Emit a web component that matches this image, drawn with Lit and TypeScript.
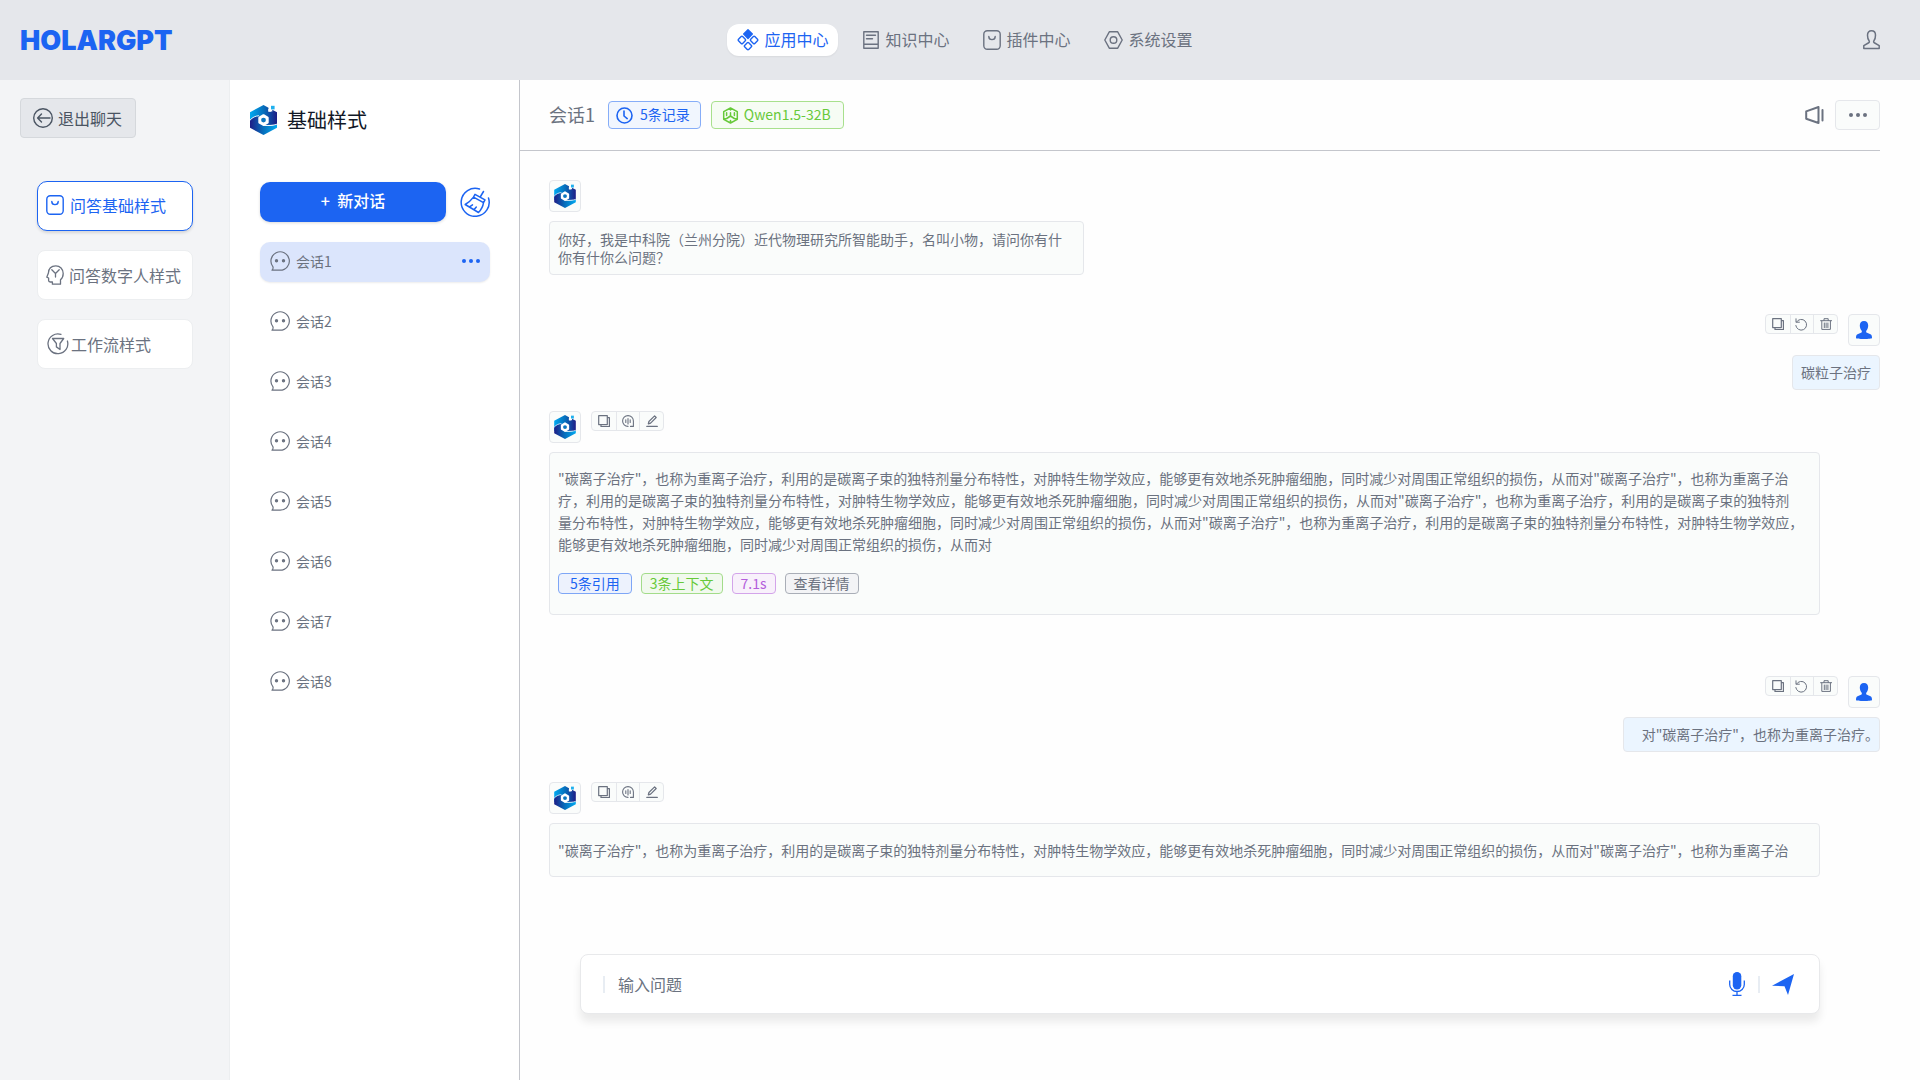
import { LitElement, html, css, svg } from "lit";
import { customElement, property, state } from "lit/decorators.js";

const line = (body: unknown, w: number, h: number, stroke = 1.3) => html`
  <svg width=${w} height=${h} viewBox="0 0 ${w} ${h}" fill="none" stroke="currentColor"
    stroke-width=${stroke} stroke-linecap="round" stroke-linejoin="round" aria-hidden="true">${body}</svg>`;

const icons = {
  back: () => line(svg`<circle cx="10" cy="10" r="9.3"/><path d="M17 10H5M8.5 6L4.6 10l3.9 4"/>`, 20, 20, 1.4),
  bag: () => line(svg`<rect x="0.8" y="0.8" width="16.4" height="18.4" rx="3.5"/><path d="M5.8 6.5c0 4.2 6.4 4.2 6.4 0"/>`, 18, 20, 1.4),
  head: () => line(svg`<path d="M14.5 19.2v-4.4c2-1.6 2.7-3.6 2.7-6.2C17.2 4 14 .8 9.8.8 5.4.8 2.6 3.6 2.4 8L.8 12.200l1.800.8v2.600c0 1 .6 1.400 1.600 1.400h2.200v2.200z"/><path d="M9.500 12V8.500M9.500 8.500L5.800 4.800M9.500 8.500l3.700-3.700"/>`, 18, 20, 1.3),
  funnel: () => line(svg`<path d="M20.400 8a9.900 9.900 0 1 1-6.400-6.600"/><path d="M5.500 5.500h11.200L13 10.500v6l-3.600-2.600v-3.400z"/>`, 22, 22, 1.3),
  diamonds: () => line(svg`<path d="M11 .8l4.300 4.300L11 9.400 6.700 5.100z" fill="currentColor"/><rect x="-2.900" y="-2.900" width="5.800" height="5.800" rx="1" transform="translate(4.900 11) rotate(45)"/><rect x="-2.900" y="-2.900" width="5.800" height="5.800" rx="1" transform="translate(17.100 11) rotate(45)"/><rect x="-2.900" y="-2.900" width="5.800" height="5.800" rx="1" transform="translate(11 17.100) rotate(45)"/>`, 22, 22, 1.4),
  book: () => line(svg`<path d="M.8.8h14.400v16.400H.8zM.8 13.200h14.400M3.500 4.200h9M3.500 7.700h6"/>`, 16, 18, 1.4),
  nut: () => line(svg`<path d="M5.300.8h8.400l4.500 8.200-4.500 8.200H5.300L.8 9z"/><circle cx="9.500" cy="9" r="3.300"/>`, 19, 18, 1.4),
  user: () => line(svg`<path d="M8.500.8c-2.600 0-4 1.800-4 4.400 0 2.200.4 4.200 1.700 5.800.5.9 0 1.600-.9 2L.8 15.600v3h15.400v-3L11.700 13c-.9-.4-1.400-1.100-.9-2 1.300-1.600 1.700-3.600 1.700-5.800 0-2.600-1.400-4.400-4-4.400z"/>`, 17, 20, 1.5),
  broom: () => line(svg`<path d="M19.500 2a14 14 0 1 0 9 9"/><path d="M23.500 4.500l-3 5M15 7.300l10 5.600-1.500 2.800-10-5.600zM13.500 10.100C11 13.500 8.500 15.500 5.200 17.500L18.500 25.500c2.500-2.500 4.500-6 5-9.800M9.500 19.800l3-2M14 22.800l2.300-2.800"/>`, 30, 30, 1.5),
  chat: () => line(svg`<path d="M3 15.800A9.200 9.200 0 1 1 10 19.200H2c.9-.9 1.300-2 1-3.400z"/><circle cx="6.500" cy="9.800" r="1.100" fill="currentColor"/><circle cx="13.500" cy="9.800" r="1.100" fill="currentColor"/>`, 20, 20, 1.2),
  dots: () => html`<svg width="18" height="4" viewBox="0 0 18 4" fill="currentColor" aria-hidden="true"><circle cx="2" cy="2" r="2"/><circle cx="9" cy="2" r="2"/><circle cx="16" cy="2" r="2"/></svg>`,
  clock: () => line(svg`<circle cx="8.500" cy="8.500" r="7.500"/><path d="M8 4v5l3.200 2.600"/>`, 17, 17, 1.6),
  cube: () => line(svg`<path d="M8.500 1l6.800 3.700v7.600L8.500 16l-6.800-3.700V4.700zM8.500 1v2M8.500 9V5.800M8.500 9l-3.800 2.500M8.500 9l3.800 2.500M1.700 12.300l3-.8M15.300 12.300l-3-.8M8.500 13.500V16M4.600 5.800v2.800M12.400 5.800v2.800"/>`, 17, 17, 1.5),
  horn: () => line(svg`<path d="M1.200 5.400L13.500 1v16L1.200 12.800zM17.500 4v10.500"/>`, 19, 18, 2),
  copy: () => line(svg`<path d="M.7.7h8.600v8.900H.7z"/><path d="M9.500 2.700h1.900v9H3v-1.900"/>`, 12, 12, 1.2),
  undo: () => line(svg`<path d="M1.500 4A5.400 5.400 0 1 1 .8 7.500M1 .8v3.400h3.400"/>`, 13, 13, 1),
  trash: () => line(svg`<path d="M.6 2.700h11M4 2.500V.7h4.200v1.800M1.800 3v8.400h8.600V3M4.300 5v4.600M6.100 5v4.600M7.900 5v4.600"/>`, 12, 12, 1),
  voice: () => line(svg`<path d="M6 11.400A5.400 5.400 0 1 1 11.400 6v5.400H8.500M3.800 4.800v2.600M6 3.500v5.500M8.200 4.800v2.600"/>`, 12, 12, 1.1),
  pen: () => line(svg`<path d="M.8 11.400h10.500M2.300 8.900l.6-2.400L8.600.9l1.600 1.600-5.600 5.600z"/>`, 12, 12, 1.2),
  person: () => html`<svg width="16" height="18" viewBox="0 0 16 18" fill="currentColor" aria-hidden="true"><path d="M8 0C5.200 0 3.800 1.800 3.800 4.500c0 2.200.8 4.100 1.900 5.300.3 1 .2 1.600-.7 2L1.500 13.300C.4 13.800 0 14.600 0 17c0 .6 3.500 1 8 1s8-.4 8-1c0-2.400-.4-3.200-1.500-3.700L11 11.800c-.9-.4-1-1-.7-2 1.100-1.200 1.900-3.100 1.900-5.300C12.200 1.800 10.800 0 8 0z"/></svg>`,
  mic: () => html`<svg width="16" height="24" viewBox="0 0 16 24" fill="none" stroke="currentColor" stroke-width="1.300" aria-hidden="true"><rect x="3.800" y="0" width="8.500" height="17.500" rx="4.200" fill="currentColor" stroke="none"/><path d="M.7 8.500v4a7.300 7 0 0 0 14.600 0v-4M8 19.500v4M3.500 23.300h9"/></svg>`,
  send: () => html`<svg width="22" height="21" viewBox="0 0 22 21" fill="currentColor" aria-hidden="true"><path d="M22 0L16 21l-3.500-8.700L0 11.800z"/></svg>`,
};

const mark = (w: number, h: number) => html`
  <svg width=${w} height=${h} viewBox="0 0 27 30" aria-hidden="true">
    <defs>
      <linearGradient id="upper" x1="0" x2="1"><stop offset="0" stop-color="#00a9f0"/><stop offset=".5" stop-color="#0670bd"/><stop offset="1" stop-color="#1d1d86"/></linearGradient>
      <linearGradient id="lower" x1="0" x2="1"><stop offset="0" stop-color="#1d1d86"/><stop offset=".5" stop-color="#0670bd"/><stop offset="1" stop-color="#00a9f0"/></linearGradient>
    </defs>
    <path d="M0 7.200L13.500 0l5 2.700v3.800h3.800V4.800L27 7.200V20H0z" fill="url(#upper)"/>
    <path d="M0 15.500C2.500 12.500 5.500 11.300 9 11l4 9.500C18 21 22 20.800 27 19.500v3.300L13.500 30 0 22.800z" fill="url(#lower)"/>
    <path d="M0 15.200C2.500 12.200 5.500 11 9 10.700M14 20.300c5 .4 9 .2 13-1.100" fill="none" stroke="#fff" stroke-width=".9"/>
    <path d="M21 .8h3.600v3.600H21z" fill="#1fb0ee"/><path d="M18.300 4h2.700v2.700h-2.700z" fill="#fff"/>
    <path d="M13.500 10.300l4.100 2.400v4.800l-4.100 2.400-4.100-2.400v-4.800z" fill="#fff" stroke="#fff" stroke-width="2.200" stroke-linejoin="round"/>
    <circle cx="13.500" cy="15.100" r="2.400" fill="#0b76bf"/>
  </svg>`;

const shared = css`
  * { box-sizing: border-box; }
  :host { font-family: "Noto Sans CJK SC", sans-serif; color: #6b7280; }
  svg { display: block; flex: none; }
  button { font: inherit; color: inherit; padding: 0; border: 0; background: none; cursor: pointer; }
  p, h1, h2, ul { margin: 0; padding: 0; }
  ul { list-style: none; }
`;

@customElement("app-nav")
class AppNav extends LitElement {
  static styles = [shared, css`
    :host { display: block; background: #e5e7eb; }
    .bar { display: grid; grid-template-columns: 1fr auto 1fr; align-items: center; height: 80px; padding: 0 40px 0 20px; }
    .brand { padding-top: 2px; color: #1c64f2; font: 900 27px/32px Inter, sans-serif; text-decoration: none; justify-self: start; }
    .links { display: flex; gap: 8px; font-size: 16px; line-height: 24px; margin-left: 28px; }
    .link { display: flex; align-items: center; gap: 5px; height: 32px; padding: 0 10px 2px; border-radius: 12px; color: inherit; text-decoration: none; }
    .link svg { margin-top: 2px; }
    .link + .link { padding: 0 8px 2px 17px; gap: 6px; }
    .active { background: #fff; color: #1c64f2; box-shadow: 0 1px 2px rgba(0, 0, 0, .06); }
    .user { justify-self: end; }
  `];
  render() {
    return html`<header class="bar">
      <a class="brand" href="#">HOLARGPT</a>
      <nav class="links">
        <a class="link active" href="#apps">${icons.diamonds()}应用中心</a>
        <a class="link" href="#knowledge">${icons.book()}知识中心</a>
        <a class="link" href="#plugins">${icons.bag()}插件中心</a>
        <a class="link" href="#settings">${icons.nut()}系统设置</a>
      </nav>
      <button class="user" aria-label="用户">${icons.user()}</button>
    </header>`;
  }
}

@customElement("style-menu")
class StyleMenu extends LitElement {
  static styles = [shared, css`
    :host { display: block; background: #f3f4f6; padding: 18px 20px; border-right: 1px solid #eceef0; font-size: 16px; line-height: 24px; }
    .exit { display: flex; align-items: center; gap: 5px; height: 40px; padding: 0 13px 0 12px; color: #4b5563; background: #e5e7eb; border: 1px solid #d5d8dc; border-radius: 4px; }
    .menu { display: grid; gap: 19px; margin: 43px 16px 0 17px; }
    .item { display: flex; align-items: center; gap: 5px; width: 100%; height: 50px; padding: 0 8px; background: #fff; border: 1px solid #eceef0; border-radius: 8px; white-space: nowrap; }
    .active { gap: 6px; padding-bottom: 2px; color: #1c64f2; border-color: #1c64f2; box-shadow: 0 2px 3px rgba(0, 0, 0, .12); border-radius: 10px; }
    .flow { gap: 2px; padding-left: 9px; }
  `];
  render() {
    return html`
      <button class="exit">${icons.back()}退出聊天</button>
      <ul class="menu">
        <li><button class="item active">${icons.bag()}问答基础样式</button></li>
        <li><button class="item">${icons.head()}问答数字人样式</button></li>
        <li><button class="item flow">${icons.funnel()}工作流样式</button></li>
      </ul>`;
  }
}

@customElement("session-list")
class SessionList extends LitElement {
  @state() current = 1;
  static styles = [shared, css`
    :host { display: block; background: #fff; border-right: 1px solid #c4c6cc; padding: 24px 29px 24px 30px; }
    .title { display: flex; align-items: center; gap: 10px; margin-left: -10px; height: 32px; font-size: 20px; line-height: 32px; font-weight: 400; color: #111827; }
    .actions { display: flex; align-items: center; gap: 14px; margin-top: 46px; }
    .new { flex: 1; height: 40px; padding-bottom: 4px; border-radius: 10px; background: #1c64f2; color: #fff; font-size: 16px; line-height: 24px; font-weight: 500; box-shadow: 0 1px 3px rgba(0, 0, 0, .15); white-space: pre; }
    .clear { color: #1c64f2; }
    .list { display: grid; gap: 20px; margin-top: 20px; }
    .row { display: flex; align-items: center; height: 40px; padding: 0 10px 2px; border-radius: 10px; font-size: 14px; line-height: 20px; }
    .pick { display: flex; align-items: center; gap: 6px; flex: 1; height: 38px; }
    .active { background: #dbe5fc; box-shadow: 0 1px 2px rgba(0, 0, 0, .08); }
    .more { display: grid; place-items: center; color: #1c64f2; height: 20px; }
  `];
  render() {
    return html`
      <h1 class="title">${mark(27, 30)}基础样式</h1>
      <div class="actions">
        <button class="new">+  新对话</button>
        <button class="clear" aria-label="清空">${icons.broom()}</button>
      </div>
      <ul class="list">
        ${[1, 2, 3, 4, 5, 6, 7, 8].map((n) => html`
          <li class="row ${n === this.current ? "active" : ""}">
            <button class="pick" @click=${() => (this.current = n)}>${icons.chat()}${`会话${n}`}</button>
            ${n === this.current ? html`<button class="more" aria-label="更多">${icons.dots()}</button>` : ""}
          </li>`)}
      </ul>`;
  }
}

@customElement("chat-message")
class ChatMessage extends LitElement {
  @property() from: "bot" | "user" = "bot";
  @property({ type: Boolean }) tools = false;
  static styles = [shared, css`
    :host { display: flex; flex-direction: column; align-items: flex-start; }
    :host([from="user"]) { align-items: flex-end; }
    .head { display: flex; gap: 10px; }
    .user.head { flex-direction: row-reverse; }
    .avatar { display: grid; place-items: center; width: 32px; height: 32px; border: 1px solid #e5e7eb; border-radius: 4px; background: #fafcfb; color: #1c64f2; }
    .tools { display: grid; grid-template-columns: repeat(3, 1fr); width: 73px; height: 20px; border: 1px solid #e5e7eb; border-radius: 4px; background: #fafcfb; }
    .tool { display: grid; place-items: center; }
    .tool + .tool { border-left: 1px solid #e5e7eb; }
  `];
  render() {
    const bot = this.from === "bot";
    const set = bot
      ? [["复制", icons.copy], ["朗读", icons.voice], ["编辑", icons.pen]] as const
      : [["复制", icons.copy], ["重试", icons.undo], ["删除", icons.trash]] as const;
    return html`
      <div class="head ${this.from}">
        <span class="avatar">${bot ? mark(22, 24) : icons.person()}</span>
        ${this.tools ? html`<div class="tools">${set.map(([label, icon]) => html`<button class="tool" aria-label=${label}>${icon()}</button>`)}</div>` : ""}
      </div>
      <slot></slot>`;
  }
}

@customElement("chat-panel")
class ChatPanel extends LitElement {
  static styles = [shared, css`
    :host { display: flex; flex-direction: column; background: #fefefe; padding: 0 40px 66px 0; font-size: 14px; }
    .top { display: flex; align-items: center; height: 71px; padding-left: 29px; border-bottom: 1px solid #c4c6cc; }
    .name { padding-bottom: 2px; font-size: 18px; line-height: 28px; font-weight: 400; margin-right: 13px; }
    .badge { display: flex; align-items: center; gap: 7px; height: 28px; padding: 0 10px 2px 7px; margin-right: 10px; border: 1px solid; border-radius: 4px; line-height: 20px; }
    .badge svg { margin-top: 2px; }
    .records { color: #1c64f2; background: #f1f6fe; border-color: #86adf8; }
    .model { color: #67c93a; background: #f6fcf4; border-color: #a8e08d; padding: 0 12px 2px 10px; gap: 5px; }
    .horn { margin: 0 11px 0 auto; }
    .more { display: grid; place-items: center; width: 45px; height: 30px; border: 1px solid #e5e7eb; border-radius: 4px; background: #fafcfb; }
    .log { display: flex; flex-direction: column; padding: 29px 0 0 29px; }
    .box { margin-top: 9px; padding: 0 8px; border: 1px solid #e5e7eb; border-radius: 4px; background: #fafcfb; line-height: 22px; }
    .hello { padding: 8px 20px 8px 8px; max-width: 535px; line-height: 18px; margin-bottom: 39px; }
    .mine { padding: 5px 8px 6px; background: #ebf5ff; margin-bottom: 21px; }
    .long { padding: 14px 8px 20px; margin-right: 60px; margin-bottom: 61px; align-self: stretch; }
    .wide { padding-left: 18px; padding-right: 0; margin-bottom: 30px; }
    .short { align-self: stretch; padding: 15px 8px; margin-right: 60px; }
    .tags { display: flex; gap: 9px; margin-top: 18px; }
    .tag { height: 21px; padding: 0 8px; border: 1px solid; border-radius: 4px; line-height: 19px; }
    .cite { color: #1c64f2; background: #edf2fd; border-color: #7ea6f6; padding: 0 11px; }
    .context { color: #67c93a; background: #f1f9ee; border-color: #a3dc8a; }
    .time { color: #b45fdc; background: #f8f1fb; border-color: #d3a4ea; }
    .detail { background: #f3f4f6; border-color: #a9aeb7; }
    .composer { display: flex; align-items: center; height: 60px; margin: auto 60px 0 60px; padding: 0 25px 0 22px; background: #fff; border: 1px solid #e8e9eb; border-radius: 8px; box-shadow: 0 8px 8px rgba(0, 0, 0, .08); color: #1c64f2; }
    .bar { width: 2px; height: 17px; background: #e8edf3; }
    .ask { flex: 1; min-width: 0; padding: 0; margin: 0 13px; border: 0; outline: 0; background: none; font: inherit; font-size: 16px; line-height: 24px; color: #374151; }
    .ask::placeholder { color: #6b7280; opacity: 1; }
    .mic { margin-right: 13px; }
    .send { margin-left: 12px; }
  `];
  render() {
    return html`
      <div class="top">
        <h2 class="name">会话1</h2>
        <span class="badge records">${icons.clock()}5条记录</span>
        <span class="badge model">${icons.cube()}Qwen1.5-32B</span>
        <button class="horn" aria-label="播报">${icons.horn()}</button>
        <button class="more" aria-label="更多">${icons.dots()}</button>
      </div>
      <div class="log">
        <chat-message from="bot"><p class="box hello">你好，我是中科院（兰州分院）近代物理研究所智能助手，名叫小物，请问你有什你有什你么问题？</p></chat-message>
        <chat-message from="user" tools><p class="box mine">碳粒子治疗</p></chat-message>
        <chat-message from="bot" tools>
          <div class="box long">
            <p>"碳离子治疗"，也称为重离子治疗，利用的是碳离子束的独特剂量分布特性，对肿特生物学效应，能够更有效地杀死肿瘤细胞，同时减少对周围正常组织的损伤，从而对"碳离子治疗"，也称为重离子治<br>疗，利用的是碳离子束的独特剂量分布特性，对肿特生物学效应，能够更有效地杀死肿瘤细胞，同时减少对周围正常组织的损伤，从而对"碳离子治疗"，也称为重离子治疗，利用的是碳离子束的独特剂<br>量分布特性，对肿特生物学效应，能够更有效地杀死肿瘤细胞，同时减少对周围正常组织的损伤，从而对"碳离子治疗"，也称为重离子治疗，利用的是碳离子束的独特剂量分布特性，对肿特生物学效应，<br>能够更有效地杀死肿瘤细胞，同时减少对周围正常组织的损伤，从而对</p>
            <div class="tags">
              <button class="tag cite">5条引用</button>
              <button class="tag context">3条上下文</button>
              <span class="tag time">7.1s</span>
              <button class="tag detail">查看详情</button>
            </div>
          </div>
        </chat-message>
        <chat-message from="user" tools><p class="box mine wide">对"碳离子治疗"，也称为重离子治疗。</p></chat-message>
        <chat-message from="bot" tools><p class="box short">"碳离子治疗"，也称为重离子治疗，利用的是碳离子束的独特剂量分布特性，对肿特生物学效应，能够更有效地杀死肿瘤细胞，同时减少对周围正常组织的损伤，从而对"碳离子治疗"，也称为重离子治</p></chat-message>
      </div>
      <form class="composer" @submit=${(e: Event) => e.preventDefault()}>
        <span class="bar"></span>
        <input class="ask" type="text" aria-label="输入问题" placeholder="输入问题" />
        <button class="mic" type="button" aria-label="语音输入">${icons.mic()}</button>
        <span class="bar"></span>
        <button class="send" type="submit" aria-label="发送">${icons.send()}</button>
      </form>`;
  }
}

@customElement("app-root")
class AppRoot extends LitElement {
  static styles = css`
    :host { display: flex; flex-direction: column; min-height: 100vh; }
    .body { flex: 1; display: grid; grid-template-columns: 230px 290px minmax(0, 1fr); }
  `;
  render() {
    return html`<app-nav></app-nav>
      <div class="body"><style-menu></style-menu><session-list></session-list><chat-panel></chat-panel></div>`;
  }
}
